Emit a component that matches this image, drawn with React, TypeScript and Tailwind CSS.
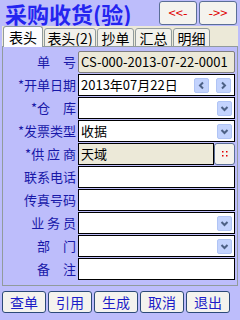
import React from 'react';

const font = { fontFamily: '"Noto Sans CJK SC", "Liberation Sans", sans-serif' };

const rows: { label: string; star?: boolean; kind: string; value?: string }[] = [
    { label: '单　号', kind: 'readonly', value: 'CS-000-2013-07-22-0001' },
    { label: '开单日期', star: true, kind: 'date', value: '2013年07月22日' },
    { label: '仓　库', star: true, kind: 'select' },
    { label: '发票类型', star: true, kind: 'select', value: '收据' },
    { label: '供 应 商', star: true, kind: 'lookup', value: '天域' },
    { label: '联系电话', kind: 'text' },
    { label: '传真号码', kind: 'text' },
    { label: '业 务 员', kind: 'select' },
    { label: '部　门', kind: 'select' },
    { label: '备　注', kind: 'text' },
];

const tabs = [
    { t: '表头', w: 'w-[40px]' },
    { t: '表头(2)', w: 'w-[52px]' },
    { t: '抄单', w: 'w-[37px]' },
    { t: '汇总', w: 'w-[37px]' },
    { t: '明细', w: 'w-[37px]' },
];
const actions = ['查单', '引用', '生成', '取消', '退出'];

const ArrowBtn: React.FC<{ dir: 'left' | 'right' | 'down' }> = ({ dir }) => (
    <div className="w-[15px] h-[15px] rounded-[2px] bg-[#c3d3fd] border border-[#b0c4f5] flex items-center justify-center">
        <svg width="9" height="9" viewBox="0 0 9 9">
            {dir === 'left' && <path d="M6 1.5 L3 4.5 L6 7.5" stroke="#4d6185" strokeWidth="2" fill="none" />}
            {dir === 'right' && <path d="M3 1.5 L6 4.5 L3 7.5" stroke="#4d6185" strokeWidth="2" fill="none" />}
            {dir === 'down' && <path d="M1.5 3 L4.5 6 L7.5 3" stroke="#4d6185" strokeWidth="2" fill="none" />}
        </svg>
    </div>
);

const Field: React.FC<{ kind: string; value?: string }> = ({ kind, value }) => {
    if (kind === 'readonly') {
        return (
            <div className="flex-1 h-full bg-[#ece9d8] border border-[#7f7f7f] rounded-[2px] flex items-center px-[2px] text-[13px] text-black">
                {value}
            </div>
        );
    }
    if (kind === 'lookup') {
        return (
            <div className="flex-1 h-full flex">
                <div className="flex-1 bg-[#ece9d8] border border-black flex items-center px-[2px] text-[13px] text-black">{value}</div>
                <div className="w-[21px] bg-[#f4f3ee] border border-[#5a6e96] rounded-[3px] flex items-center justify-center">
                    <svg width="8" height="8" viewBox="0 0 8 8">
                        <rect x="1" y="1" width="1.5" height="1.5" fill="#e00000" />
                        <rect x="5" y="1" width="1.5" height="1.5" fill="#e00000" />
                        <rect x="1" y="5" width="1.5" height="1.5" fill="#e00000" />
                        <rect x="5" y="5" width="1.5" height="1.5" fill="#e00000" />
                    </svg>
                </div>
            </div>
        );
    }
    return (
        <div className="flex-1 h-full bg-white border border-black flex items-center pl-[2px] pr-[2px] text-[13px] text-black">
            <span className="flex-1">{value}</span>
            {kind === 'date' && (
                <div className="flex gap-[7px] pr-[1px]">
                    <ArrowBtn dir="left" />
                    <ArrowBtn dir="right" />
                </div>
            )}
            {kind === 'select' && <ArrowBtn dir="down" />}
        </div>
    );
};

export default function App() {
    return (
        <div className="w-[240px] h-[320px] bg-[#bdbdfb] overflow-hidden flex flex-col" style={font}>
            {/* header */}
            <div className="h-[26px] flex items-center">
                <div className="pl-[5px] text-[22px] leading-[26px] font-bold text-[#2424f0] whitespace-nowrap">采购收货(验)</div>
                <div className="ml-auto mr-[3px] flex gap-[2px]">
                    <div className="w-[38px] h-[24px] bg-[#f4f3ee] border border-[#5a6e96] rounded-[3px] flex items-center justify-center text-[#e00000] text-[13px]">&lt;&lt;-</div>
                    <div className="w-[38px] h-[24px] bg-[#f4f3ee] border border-[#5a6e96] rounded-[3px] flex items-center justify-center text-[#e00000] text-[13px]">-&gt;&gt;</div>
                </div>
            </div>

            {/* tab control */}
            <div className="mx-[2px] bg-[#ece9d8] flex flex-col">
                <div className="h-[21px] flex items-end gap-[1px] pl-[1px]">
                    {tabs.map((t, i) => (
                        <div key={t.t}
                            className={`${t.w} ${i === 0 ? 'h-[21px] bg-[#fcfcfe] border-b-0 z-10' : 'h-[19px] bg-[#f2f1eb] border-b'} border border-[#919b9c] rounded-t-[3px] flex items-center justify-center text-[14px] leading-[16px] whitespace-nowrap text-black`}>
                            {t.t}
                        </div>
                    ))}
                </div>
                <div className="h-[240px] border border-[#919b9c] bg-[#bdbdfb] -mt-[1px] px-[2px] pt-[4px] flex flex-col gap-[1px]">
                    {rows.map(r => (
                        <div key={r.label} className="h-[22px] flex items-stretch">
                            <div className="w-[73px] text-right pr-[2px] text-[13px] leading-[22px] text-[#1818a8] whitespace-nowrap">
                                {r.star && '*'}{r.label}
                            </div>
                            <Field kind={r.kind} value={r.value} />
                        </div>
                    ))}
                </div>
            </div>

            {/* bottom buttons */}
            <div className="mt-[5px] pl-[2px] flex gap-[2px]">
                {actions.map(a => (
                    <div key={a} className="w-[44px] h-[22px] bg-[#f4f3ee] border border-[#2c4a78] rounded-[3px] flex items-center justify-center text-[14px] text-[#1c1cc8]">
                        {a}
                    </div>
                ))}
            </div>
        </div>
    );
}
